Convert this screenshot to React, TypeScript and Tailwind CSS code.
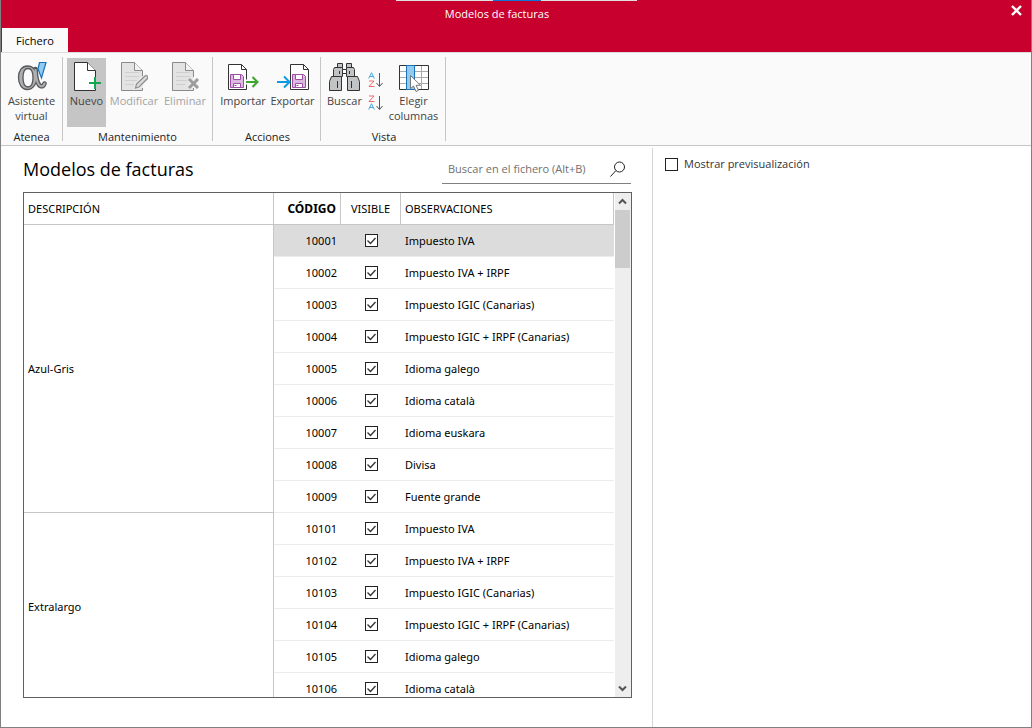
import React from "react";

type Row = { code: string; note: string };
type Group = { name: string; rows: Row[] };

const groups: Group[] = [
  {
    name: "Azul-Gris",
    rows: [
      { code: "10001", note: "Impuesto IVA" },
      { code: "10002", note: "Impuesto IVA + IRPF" },
      { code: "10003", note: "Impuesto IGIC (Canarias)" },
      { code: "10004", note: "Impuesto IGIC + IRPF (Canarias)" },
      { code: "10005", note: "Idioma galego" },
      { code: "10006", note: "Idioma català" },
      { code: "10007", note: "Idioma euskara" },
      { code: "10008", note: "Divisa" },
      { code: "10009", note: "Fuente grande" },
    ],
  },
  {
    name: "Extralargo",
    rows: [
      { code: "10101", note: "Impuesto IVA" },
      { code: "10102", note: "Impuesto IVA + IRPF" },
      { code: "10103", note: "Impuesto IGIC (Canarias)" },
      { code: "10104", note: "Impuesto IGIC + IRPF (Canarias)" },
      { code: "10105", note: "Idioma galego" },
      { code: "10106", note: "Idioma català" },
    ],
  },
];

function AlphaIcon() {
  return (
    <svg width="30" height="31" viewBox="0 0 30 31" aria-hidden="true">
      <path d="M18.500 9c.5 8 1.500 15.500 5 17 2 .8 3.500-.5 4-2.500" fill="none" stroke="#58595b" strokeWidth="4.600" strokeLinecap="round" />
      <path
        d="M10.500 6C5 6 1.500 10.500 1.500 17.500S5 29.500 10 29.500c6.500 0 10-6.500 10-12S17 6 10.500 6Z M11 8.500c3.500 0 5 4 5 9s-1.500 9.500-5 9.500-5-4-5-9.500 1.500-9 5-9Z"
        fill="#adafb0" fillRule="evenodd" stroke="#58595b" strokeWidth="1.300"
      />
      <path d="M18.500 10c.5 8 1.500 14.500 5 16 2 .8 3.500-.5 4-2.500" fill="none" stroke="#adafb0" strokeWidth="2.200" strokeLinecap="round" />
      <path d="M22.500 2.500h6.500l-4.500 15.500-3.500-9Z" fill="#92caf0" stroke="#1a73b8" strokeWidth="1.200" />
    </svg>
  );
}

function NewIcon() {
  return (
    <svg width="28" height="31" viewBox="0 0 28 31" aria-hidden="true">
      <path d="M22.500 17v-6.500l-8-8h-13v28h21V29" fill="#fff" stroke="#333" />
      <path d="M14.500 2.500v8h8" fill="#fff" stroke="#333" />
      <path d="M16 23h12M22 17v12" stroke="#12a650" strokeWidth="2" />
    </svg>
  );
}

function DisabledPage({ children }: { children: React.ReactNode }) {
  return (
    <svg width="28" height="31" viewBox="0 0 28 31" aria-hidden="true">
      <path d="M22.500 17v-6.500l-8-8h-13v28h21V28" fill="#e3e3e3" stroke="#8a8a8a" />
      <path d="M14.500 2.500v8h8" fill="#f2f2f2" stroke="#8a8a8a" />
      <path d="M5 12.500h14M5 16.500h14M5 20.500h12M5 24.500h9" stroke="#cfcfcf" />
      {children}
    </svg>
  );
}

function EditIcon() {
  return (
    <DisabledPage>
      <path d="M15.500 28l1-4L25 16a1.800 1.800 0 0 1 2.500 2.500L19 27Z" fill="#e3e3e3" stroke="#f0f0f0" strokeWidth="3" />
      <path d="M15.500 28l1-4L25 16a1.800 1.800 0 0 1 2.500 2.500L19 27Z" fill="#dcdcdc" stroke="#8f8f8f" strokeWidth="1.300" />
    </DisabledPage>
  );
}

function DeleteIcon() {
  return (
    <DisabledPage>
      <path d="M18 19l9 9M27 19l-9 9" stroke="#f0f0f0" strokeWidth="5" />
      <path d="M18 19l9 9M27 19l-9 9" stroke="#9c9c9c" strokeWidth="3" />
    </DisabledPage>
  );
}

function FloppyPage() {
  return (
    <>
      <path d="M.5.500h13l5 5v20H.500Z" fill="#fff" stroke="#333" />
      <path d="M13.500.500v5h5" fill="none" stroke="#333" />
      <path d="M2.500 10.500h11l2 2v11h-13Z" fill="#dcb8df" stroke="#9b4fa3" />
      <path d="M5.500 10.500h7v5h-7Z" fill="#fff" stroke="#9b4fa3" />
      <path d="M5.500 23.500v-4h7v4Z" fill="#fff" stroke="#9b4fa3" />
      <path d="M6.500 21.500h2" stroke="#9b4fa3" />
    </>
  );
}

function ImportIcon() {
  return (
    <svg width="32" height="31" viewBox="0 -3 32 31" aria-hidden="true">
      <g transform="translate(1 1)"><FloppyPage /></g>
      <path d="M19 19h9" stroke="#fafafa" strokeWidth="5" />
      <path d="M19 19h11M25.500 14l5 5-5 5" fill="none" stroke="#3ea52f" strokeWidth="2" />
    </svg>
  );
}

function ExportIcon() {
  return (
    <svg width="34" height="31" viewBox="0 -3 34 31" aria-hidden="true">
      <g transform="translate(14 1)"><FloppyPage /></g>
      <path d="M1 19h12M8 13.500l5.500 5.500L8 24.500" fill="none" stroke="#0c9be0" strokeWidth="2" />
    </svg>
  );
}

function BinocularsIcon() {
  return (
    <svg width="31" height="31" viewBox="0 -2 31 31" aria-hidden="true">
      <g fill="#c2c3c4" stroke="#333">
        <path d="M8.500 1.500h5v4h-5ZM17.500 1.500h5v4h-5Z" />
        <path d="M5.500 5.500h8v9h-9v-7ZM17.500 5.500h7l1 2v7h-8Z" />
        <path d="M13.500 7.500h4v4h-4Z" fill="#fff" />
        <path d="M2.500 14.500h10v14H.500v-9ZM18.500 14.500h10l2 5v9h-12Z" />
        <path d="M8.500 19v7M22.500 19v7M10.500 9v3M20.500 9v3" />
      </g>
    </svg>
  );
}

function SortIcon({ descending = false }: { descending?: boolean }) {
  const letterA = "M.7 6.500 3.500.7l2.800 5.800M1.700 4.500h3.600";
  const letterZ = "M1 1h5L1 6.500h5.500";
  return (
    <svg width="16" height="17" viewBox="0 0 16 17" aria-hidden="true" fill="none">
      <path d={descending ? letterZ : letterA} stroke={descending ? "#ef6a6a" : "#4ba6dc"} />
      <g transform="translate(0 8)">
        <path d={descending ? letterA : letterZ} stroke={descending ? "#4ba6dc" : "#ef6a6a"} />
      </g>
      <path d="M11.500 1v13M8.500 11l3 3.500 3-3.500" stroke="#555" />
    </svg>
  );
}

function ColumnsIcon() {
  return (
    <svg width="32" height="33" viewBox="0 -5 32 33" aria-hidden="true">
      <path d="M1.500 1.500h29v24h-29Z" fill="#fff" />
      <path d="M1 7.500h30M1 13.500h30M1 19.500h30M23.500 1v24" stroke="#aaa" />
      <path d="M1.500 1.500h29v24h-29Z" fill="none" stroke="#333" />
      <path d="M8.500 1.500h8v24h-8Z" fill="#92caf0" stroke="#1a73b8" />
      <path d="M12.500 11.500v13l3-2.500 2.500 5.500 2.500-1.200-2.500-5h4.500Z" fill="#fff" stroke="#777" />
    </svg>
  );
}

function RibbonButton({
  icon, children, className = "", disabled = false,
}: { icon: React.ReactNode; children: React.ReactNode; className?: string; disabled?: boolean }) {
  return (
    <button
      type="button"
      disabled={disabled}
      className={`flex h-[69px] shrink-0 flex-col items-center leading-[15px] text-[#444] disabled:text-[#a3a3a3] ${className}`}
    >
      <span className="flex h-[35px] items-center justify-center">{icon}</span>
      <span className="whitespace-nowrap">{children}</span>
    </button>
  );
}

function RibbonGroup({ label, className, children }: { label: string; className: string; children: React.ReactNode }) {
  return (
    <section aria-label={label} className={`flex shrink-0 flex-col pt-[5px] ${className}`}>
      <div className="flex h-[70px] justify-center">{children}</div>
      <div className="pt-0.5 text-center leading-4 text-[#222]">{label}</div>
    </section>
  );
}

function Separator() {
  return <div className="my-1 w-px shrink-0 bg-[#c6c6c6]" />;
}

function RowCheck({ label }: { label: string }) {
  return (
    <span className="inline-grid align-middle">
      <input
        type="checkbox"
        defaultChecked
        aria-label={label}
        className="peer col-start-1 row-start-1 size-[13px] appearance-none border border-[#222] bg-white"
      />
      <svg viewBox="0 0 13 13" className="pointer-events-none invisible col-start-1 row-start-1 size-[13px] peer-checked:visible" aria-hidden="true">
        <path d="M2.500 6.500l3 3 5-5.500" fill="none" stroke="#333" strokeWidth="1.300" />
      </svg>
    </span>
  );
}

export default function App() {
  return (
    <div className="flex h-screen flex-col border-x border-b border-[#808080] bg-white font-['Open_Sans','Noto_Sans',sans-serif] text-[11px] text-black">
      <header className="relative flex h-[52px] shrink-0 flex-col bg-[#c8002d]">
        <div className="absolute top-0 left-[395px] flex h-px w-[241px] justify-center bg-[#e0dede]">
          <div className="w-12 bg-[#0b78d8]" />
        </div>
        <div className="flex h-7 items-center">
          <h1 className="flex-1 text-center leading-4 text-white">Modelos de facturas</h1>
          <button type="button" aria-label="Cerrar" className="flex h-5 w-[38px] items-center justify-center self-start pl-2">
            <svg width="11" height="11" viewBox="0 0 11 11" aria-hidden="true">
              <path d="M1 1l9 9M10 1l-9 9" stroke="#fff" strokeWidth="2.400" />
            </svg>
          </button>
        </div>
        <nav className="flex flex-1 pl-px">
          <button type="button" className="w-[66px] bg-[#fafafa] pt-0.5 text-center leading-4">Fichero</button>
        </nav>
      </header>

      <div className="flex h-[94px] shrink-0 border-y border-b-[#c6c6c6] border-t-[#dcdcdc] bg-[#fafafa]">
        <RibbonGroup label="Atenea" className="w-[61px]">
          <RibbonButton icon={<AlphaIcon />} className="w-[61px]">Asistente<br />virtual</RibbonButton>
        </RibbonGroup>
        <Separator />
        <RibbonGroup label="Mantenimiento" className="w-[149px]">
          <RibbonButton icon={<NewIcon />} className="w-[39px] bg-[#c5c5c5]">Nuevo</RibbonButton>
          <RibbonButton icon={<EditIcon />} className="w-14" disabled>Modificar</RibbonButton>
          <RibbonButton icon={<DeleteIcon />} className="w-[46px]" disabled>Eliminar</RibbonButton>
        </RibbonGroup>
        <Separator />
        <RibbonGroup label="Acciones" className="w-[107px] pl-0.5">
          <RibbonButton icon={<ImportIcon />} className="w-[50px]">Importar</RibbonButton>
          <RibbonButton icon={<ExportIcon />} className="w-[49px]">Exportar</RibbonButton>
        </RibbonGroup>
        <Separator />
        <RibbonGroup label="Vista" className="w-[124px] pl-0.5">
          <RibbonButton icon={<BinocularsIcon />} className="w-10">Buscar</RibbonButton>
          <div className="flex flex-col gap-1.5 pt-3.5 pl-[3px]">
            <button type="button" aria-label="Orden ascendente"><SortIcon /></button>
            <button type="button" aria-label="Orden descendente"><SortIcon descending /></button>
          </div>
          <RibbonButton icon={<ColumnsIcon />} className="w-[60px]">Elegir<br />columnas</RibbonButton>
        </RibbonGroup>
        <Separator />
      </div>

      <main className="grid min-h-0 flex-1 grid-cols-[minmax(0,651fr)_minmax(0,379fr)]">
        <section className="flex min-h-0 flex-col pr-5 pb-[29px] pl-[22px]">
          <div className="flex h-[46px] shrink-0 items-start justify-between">
            <h2 className="pt-2.5 text-[18px] leading-[26px]">Modelos de facturas</h2>
            <div className="mt-2 mr-px flex h-[30px] w-[189px] items-center border-b border-[#808080] pr-[5px] pl-1.5">
              <input
                type="text"
                aria-label="Buscar en el fichero"
                placeholder="Buscar en el fichero (Alt+B)"
                className="min-w-0 flex-1 leading-4 outline-none placeholder:text-[#707070]"
              />
              <svg width="16" height="16" viewBox="0 0 16 16" fill="none" stroke="#222" className="shrink-0" aria-hidden="true">
                <circle cx="9.500" cy="6" r="5" />
                <path d="M6 9.500.5 15.500" />
              </svg>
            </div>
          </div>

          <div className="flex min-h-0 flex-1 border border-[#606060]">
            <div className="min-w-0 flex-1 overflow-hidden">
              <table className="w-full table-fixed border-separate border-spacing-0 font-['Noto_Sans','Open_Sans',sans-serif]">
                <thead>
                  <tr className="h-8 text-left">
                    <th className="border-r border-b border-[#c6c6c6] px-1 pt-0.5 font-normal">DESCRIPCIÓN</th>
                    <th className="w-[67px] border-r border-b border-[#c6c6c6] px-1 text-right text-[12px] font-bold">CÓDIGO</th>
                    <th className="w-[60px] border-r border-b border-[#c6c6c6] pt-0.5 text-center font-normal">VISIBLE</th>
                    <th className="w-[213px] border-r border-b border-[#c6c6c6] px-1 pt-0.5 font-normal">OBSERVACIONES</th>
                  </tr>
                </thead>
                <tbody>
                  {groups.map((group, g) =>
                    group.rows.map((row, r) => (
                      <tr key={row.code} className={g === 0 && r === 0 ? "h-8 bg-[#dcdcdc]" : "h-8"}>
                        {r === 0 && (
                          <td
                            rowSpan={group.rows.length}
                            className={`border-r border-b border-[#c6c6c6] bg-white px-1 ${g === 1 ? "pb-0.5" : "pt-0.5"}`}
                          >
                            {group.name}
                          </td>
                        )}
                        <td className="border-b border-[#ececec] px-1 pt-0.5 text-right">{row.code}</td>
                        <td className="border-b border-[#ececec] text-center leading-none">
                          <RowCheck label={`Visible ${row.code}`} />
                        </td>
                        <td className="border-b border-[#ececec] px-1 pt-0.5">{row.note}</td>
                      </tr>
                    ))
                  )}
                </tbody>
              </table>
            </div>
            <div className="ml-px flex w-4 shrink-0 flex-col bg-[#eeeeee]">
              <button type="button" aria-label="Subir" className="flex h-[17px] w-[15px] items-center justify-center">
                <svg width="9" height="7" viewBox="0 0 9 7" aria-hidden="true">
                  <path d="M1 5.500 4.500 2 8 5.500" fill="none" stroke="#555" strokeWidth="2" />
                </svg>
              </button>
              <div className="h-[58px] w-[15px] bg-[#cccccc]" />
              <div className="flex-1" />
              <button type="button" aria-label="Bajar" className="flex h-[17px] w-[15px] items-center justify-center">
                <svg width="9" height="7" viewBox="0 0 9 7" aria-hidden="true">
                  <path d="M1 1.500 4.500 5 8 1.500" fill="none" stroke="#555" strokeWidth="2" />
                </svg>
              </button>
            </div>
          </div>
        </section>

        <aside className="mt-0.5 border-l border-[#d4d4d4] pt-2 pl-3">
          <label className="flex h-4 items-center gap-1.5 leading-4 text-[#333]">
            <input type="checkbox" className="size-[13px] appearance-none border border-[#222] bg-white checked:bg-[#444]" />
            Mostrar previsualización
          </label>
        </aside>
      </main>
    </div>
  );
}
